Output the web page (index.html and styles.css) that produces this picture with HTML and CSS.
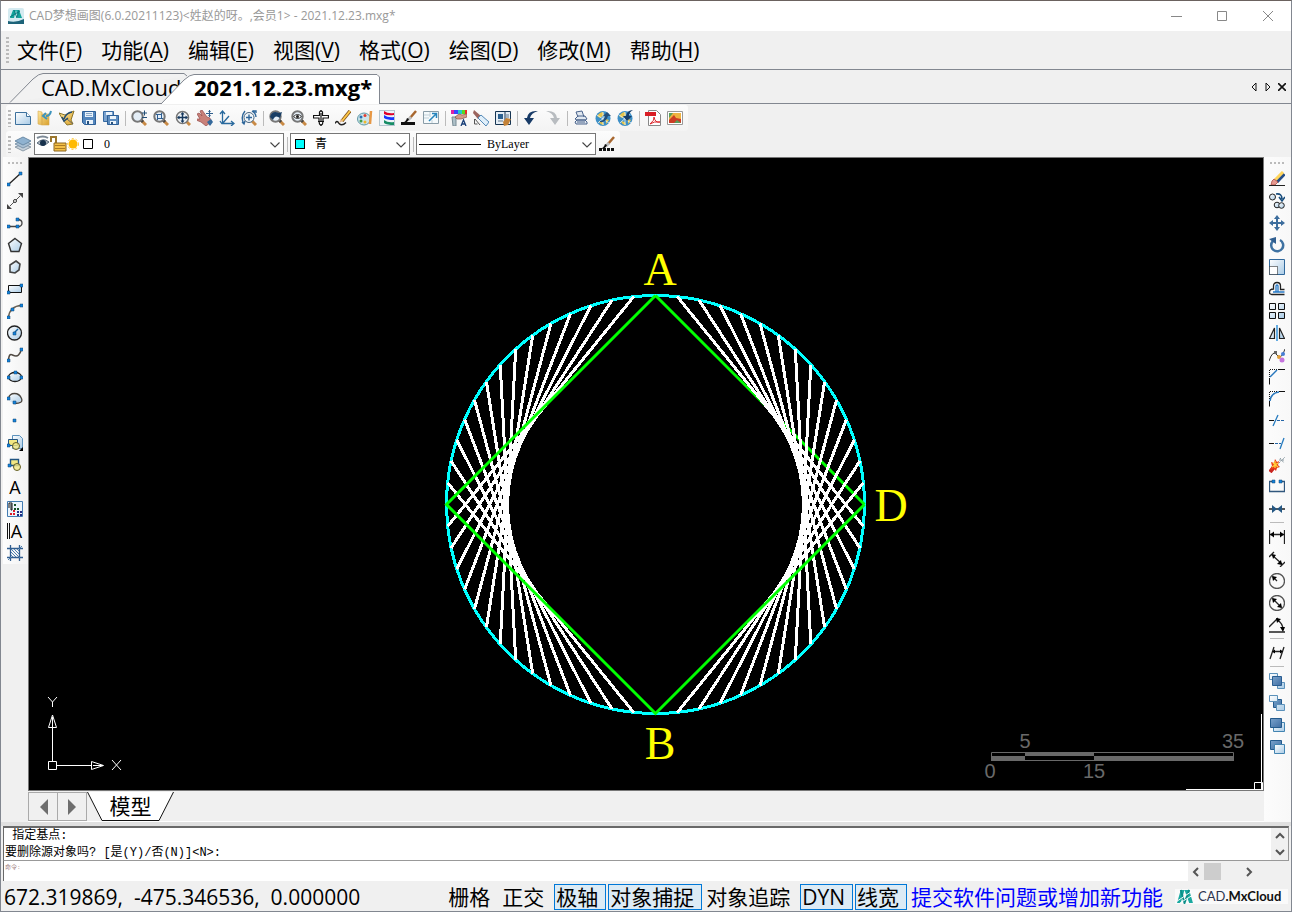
FILE: index.html
```html
<!DOCTYPE html>
<html lang="zh-CN">
<head>
<meta charset="utf-8">
<title>CAD梦想画图</title>
<link rel="stylesheet" href="styles.css">
</head>
<body>
<svg class="defs" aria-hidden="true">
  <defs>
    <linearGradient id="pale" x1="0" y1="0" x2="1" y2="1"><stop offset="0" stop-color="#fff"/><stop offset="1" stop-color="#a9cbe6"/></linearGradient>
    <linearGradient id="steel" x1="0" y1="0" x2="1" y2="1"><stop offset="0" stop-color="#7aa3cc"/><stop offset="1" stop-color="#3e6da3"/></linearGradient>
    <linearGradient id="gold" x1="0" y1="0" x2="1" y2="1"><stop offset="0" stop-color="#ffe9a0"/><stop offset="1" stop-color="#d9a02c"/></linearGradient>
    <symbol id="lens" viewBox="0 0 16 16"><path d="M10 10l5 5" stroke="#c98a45" stroke-width="3"/><path d="M10 10l2 2" stroke="#444" stroke-width="3"/><circle cx="6.5" cy="6.5" r="5.2" fill="#e4eef7" stroke="#777" stroke-width="2"/></symbol>
    <symbol id="brush" viewBox="0 0 16 16"><path d="M15 1L9 8" stroke="#a8672f" stroke-width="2.5"/><path d="M10 7l-3 3" stroke="#bbb" stroke-width="3"/><path d="M8 9q-1 4-7 4q4-1 5-5z" fill="#111"/></symbol>
    <symbol id="globe" viewBox="0 0 16 16"><circle cx="8" cy="8.5" r="7.500" fill="#3c8fc7"/><path d="M2 6q3-4 6-4l1 3l-4 3zM4 11l4 1l1 3q-4 0-5-4zM11 9l3 1l-3 4z" fill="#e8c54a"/><path d="M2 5l12 8M3 13L13 4M8 2v13" stroke="#e9f4fa" stroke-width=".8" fill="none"/></symbol>
    <symbol id="mark" viewBox="0 0 18 16"><path d="M1 15L5 1h4l-4 14z M9 1h5l4 14h-4z" fill="#1aa9a0"/><path d="M5 1l4 14 5-14" stroke="#0b8e88" fill="none" stroke-width="2"/><path d="M1 13L16 3M4 15L17 7" stroke="#fff" stroke-width="1"/></symbol>
    <symbol id="down" viewBox="0 0 10 6"><path d="M.5.5L5 5L9.500.5" fill="none" stroke="#444" stroke-width="1.100"/></symbol>
  </defs>
</svg>

<div class="window">
  <header class="titlebar">
    <svg class="app-icon" viewBox="0 0 16 16"><rect width="16" height="16" rx="2" fill="#d5ebf1"/><path d="M0 16V13q8 2 16-2v5z" fill="#1d6379"/><path d="M2 10L5 2h3l-2 8zM8 2h3l3 8h-4z" fill="#12a49b"/><path d="M6 2l3 8 2-8M2 9l10-6" stroke="#0a7c80" fill="none"/></svg>
    <h1>CAD梦想画图(6.0.20211123)&lt;姓赵的呀。,会员1&gt; - 2021.12.23.mxg*</h1>
    <div class="window-buttons">
      <button aria-label="最小化"><svg viewBox="0 0 12 12"><path d="M1 6.500h11"/></svg></button>
      <button aria-label="最大化"><svg viewBox="0 0 12 12"><path d="M1.500 1.500h9v9h-9z"/></svg></button>
      <button aria-label="关闭"><svg viewBox="0 0 12 12"><path d="M1 1l10 10M11 1L1 11"/></svg></button>
    </div>
  </header>

  <nav class="menubar">
    <span class="grip"></span>
    <button>文件(<u>F</u>)</button><button>功能(<u>A</u>)</button><button>编辑(<u>E</u>)</button><button>视图(<u>V</u>)</button><button>格式(<u>O</u>)</button><button>绘图(<u>D</u>)</button><button>修改(<u>M</u>)</button><button>帮助(<u>H</u>)</button>
  </nav>

  <div class="doc-tabs">
    <button class="doc-tab cloud"><svg viewBox="0 0 178 30"><path d="M1 29.500L24 6Q30 .500 34 .500H175L178 3"/></svg><span>CAD.MxCloud</span></button>
    <button class="doc-tab active"><svg viewBox="0 0 219 30"><path d="M0 30L23 6Q29 .500 33 .500H216L218.500 3V30"/></svg><span>2021.12.23.mxg*</span></button>
    <div class="tab-tools">
      <button aria-label="上一个"><svg viewBox="0 0 8 8"><path d="M6 0v8L2 4z" fill="none" stroke="#111"/></svg></button>
      <button aria-label="下一个"><svg viewBox="0 0 8 8"><path d="M2 0v8l4-4z" fill="none" stroke="#111"/></svg></button>
      <button aria-label="关闭标签"><svg viewBox="0 0 8 8"><path d="M0 0l8 8M8 0L0 8" stroke="#111" stroke-width="1.600"/></svg></button>
    </div>
  </div>

  <div class="toolbars">
    <div class="toolbar">
      <span class="grip"></span>
      <button aria-label="新建"><svg viewBox="0 0 16 16"><path d="M.500 2.500h11l4 4v8H.500z" fill="url(#pale)" stroke="#3d719d"/><path d="M11.500 2.500v4h4" fill="#fff" stroke="#3d719d"/></svg></button>
      <button aria-label="打开"><svg viewBox="0 0 16 16"><path d="M1 1l4 1v13l-4-1zM5 4h7v11H5z" fill="url(#gold)" stroke="#d6aa4e" stroke-width=".600"/><path d="M14 1q-1 5-5 5M9 3L6 6l4 3" stroke="#3e94bd" fill="none" stroke-width="2"/></svg></button>
      <button aria-label="打开云图"><svg viewBox="0 0 16 16"><path d="M0 3l6 2 9-4-3 9 2 4-6 1L4 10z" fill="url(#gold)" stroke="#8b7527"/><path d="M13 2Q7 3 5 9M3 7l2 4 4-3" fill="none" stroke="#244d71" stroke-width="1.500"/><path d="M8 9l6 5" stroke="#666"/></svg></button>
      <button aria-label="保存"><svg viewBox="0 0 16 16"><path d="M1.500 1.500h13v13h-11l-2-2z" fill="#5386bd" stroke="#2d5f97"/><path d="M4 2h8v5H4zM5 10h7v4H5z" fill="#e9f2fa"/><path d="M5 3.500h6M5 5.500h6" stroke="#89a8c8"/><path d="M6 11h2v3H6z" fill="#29527f"/></svg></button>
      <button aria-label="另存为"><svg viewBox="0 0 16 16"><path d="M.500 1.500h10v10H.500z" fill="#7aa2ce" stroke="#3569a1"/><path d="M3 2h6v3H3z" fill="#eaf3fb"/><path d="M4.500 5.500h11v9h-11z" fill="#5d8dc0" stroke="#2d5f97"/><path d="M7 6h6v3H7zM7 11h6v3H7z" fill="#edf5fb"/><path d="M8 12h2v2H8z" fill="#29527f"/></svg></button>
      <i class="sep"></i>
      <button aria-label="缩放"><svg viewBox="0 0 16 16"><use href="#lens"/><path d="M11 3h5M13.500.500v5M11 7.500h5" stroke="#224e77"/></svg></button>
      <button aria-label="窗口缩放"><svg viewBox="0 0 16 16"><use href="#lens"/><path d="M4.500 4.500h4v4h-4zM3 4.500h2M8 8.500h2M8.500 3v2M4.500 8v2" fill="none" stroke="#2f5f93"/></svg></button>
      <button aria-label="范围缩放"><svg viewBox="0 0 16 16"><path d="M11 11l4 4" stroke="#c98a45" stroke-width="3"/><circle cx="7.500" cy="7.500" r="6" fill="#f3f7fa" stroke="#777" stroke-width="1.600"/><path d="M3 7.500h9M7.500 3v9" stroke="#17395e" stroke-width="1.500"/><path d="M2 7.500l2.500-2v4zM13 7.500l-2.500-2v4zM7.500 2l-2 2.500h4zM7.500 13l-2-2.500h4z" fill="#17395e"/></svg></button>
      <button aria-label="平移"><svg viewBox="0 0 16 16"><path d="M0 4l2-1 3 3-2-5 2-1 5 7 3 1 1 4-5 4-5-4-5-2 1-1 3 0z" fill="#c98078" stroke="#934a4a" stroke-width=".700"/><path d="M10 12l4-3 2 3-3 4z" fill="#35699b"/><path d="M9 3.500h7M12.500 0v7" stroke="#315f8d"/><path d="M11 2l1.500-2L14 2zM11 5l1.500 2L14 5z" fill="#315f8d"/></svg></button>
      <button aria-label="坐标系"><svg viewBox="0 0 16 16"><path d="M3.500 1v12.500H15M3.500 13.500L10 6M1 4l2.500-3L6 4M12 11l3 2.500-3 2.500M1 11l2 3" fill="none" stroke="#29699d" stroke-width="1.300"/></svg></button>
      <button aria-label="动态缩放"><svg viewBox="0 0 16 16"><path d="M11 11l4 4" stroke="#c98a45" stroke-width="3"/><circle cx="8" cy="7.500" r="5" fill="#f0f6fa" stroke="#47637d"/><path d="M5 7.500h6M8 4.500v6M4 1Q-1 7 3 14M1 12l2 2 1-3M11 1q4 2 4 6M12 1h3v2" fill="none" stroke="#2d669a" stroke-width="1.400"/></svg></button>
      <i class="sep"></i>
      <button aria-label="上一视图"><svg viewBox="0 0 16 16"><use href="#lens"/><path d="M1 7q2-7 9-4l3-1-2 6Q6 4 4 10z" fill="#193e65"/></svg></button>
      <button aria-label="查看"><svg viewBox="0 0 16 16"><use href="#lens"/><path d="M2.500 6.500q4-4 8 0q-4 4-8 0" fill="#fff" stroke="#333"/><circle cx="6.500" cy="6.500" r="1.500" fill="#222"/></svg></button>
      <button aria-label="十字移动"><svg viewBox="0 0 16 16"><path d="M6.500 5.500V2L8 .500 9.500 2v3.500h6v2.500H10v3l-.500 3L8 15.500 6.500 14 6 11V8H.500V5.500z" fill="#fff" stroke="#111" stroke-width="1.200"/><path d="M5 11.500h6M8 3v9" stroke="#111" stroke-width="1.200"/></svg></button>
      <button aria-label="画笔"><svg viewBox="0 0 16 16"><path d="M0 13.500q2-4 4 0q3 3 7-1" fill="none" stroke="#222" stroke-width="1.300"/><path d="M15 1L7 11" stroke="#80521d" stroke-width="3.500"/><path d="M15 1L7 11" stroke="#ffc847" stroke-width="2"/><path d="M6 9l-2 4 4-2z" fill="#e3b78c"/></svg></button>
      <button aria-label="调色板"><svg viewBox="0 0 16 16"><ellipse cx="7" cy="9" rx="6.500" ry="6" fill="#cce4ea" stroke="#5e97a5"/><circle cx="4" cy="7" r="1.500" fill="#2970b4"/><circle cx="8" cy="5.500" r="1.500" fill="#e33d2f"/><circle cx="4" cy="11" r="1.500" fill="#3d9c47"/><circle cx="8" cy="12" r="1.500" fill="#efb82d"/><path d="M14 1l-1 13" stroke="#e79845" stroke-width="2.500"/></svg></button>
      <button aria-label="颜色"><svg viewBox="0 0 16 16"><rect x=".500" y=".500" width="15" height="15" fill="#eef4f8" stroke="#b5c6d0"/><path d="M5 1q4 3 10 2v2Q8 6 5 4z" fill="#e0002b"/><path d="M5 5q4 3 10 2v3Q8 10 5 8z" fill="#1736ff"/><path d="M5 10q4 3 10 2v3Q8 15 5 13z" fill="#178d66"/></svg></button>
      <button aria-label="线宽"><svg viewBox="0 0 16 16"><use href="#brush"/><path d="M0 13.500h14" stroke="#111" stroke-width="3"/></svg></button>
      <button aria-label="全屏"><svg viewBox="0 0 16 16"><path d="M.500 1.500h15v12H.500z" fill="#f5fafc" stroke="#8a9da8"/><path d="M1 5h6M7 2v5M9 10v3M1 8h5" stroke="#c2d1d9"/><path d="M6 11l7-7M9 3.500h4.500V8" fill="none" stroke="#2684bc" stroke-width="1.500"/></svg></button>
      <i class="sep"></i>
      <button aria-label="颜色选择"><svg viewBox="0 0 16 16"><path d="M0 0h3v4H0z" fill="#e020a0"/><path d="M3 0h4v4H3z" fill="#3945ff"/><path d="M7 0h4v4H7z" fill="#24c8cb"/><path d="M11 0h3v4h-3z" fill="#56db20"/><path d="M14 0h2v4h-2z" fill="#ef2828"/><path d="M1 7h4v9H2z" fill="#adc0c8" stroke="#788b94"/><path d="M4 7l4-3 3 1 5-1v3l-6 2-4 0z" fill="#d39b87" stroke="#8c5247" stroke-width=".700"/><path d="M10 16l2.500-6 2.500 6M11 14h3" stroke="#193f78" stroke-width="1.300" fill="none"/></svg></button>
      <button aria-label="清除"><svg viewBox="0 0 16 16"><path d="M1 0l7 6-3 3-5-6z" fill="#9b655f"/><path d="M5 8l3-3 8 7-3 4z" fill="#e0effa" stroke="#5489b7"/><path d="M1.500 9v5h3M2 9l5 6" fill="none" stroke="#555"/></svg></button>
      <button aria-label="打印预览"><svg viewBox="0 0 16 16"><path d="M.500 1.500h15v13H.500z" fill="#e4edf5" stroke="#163553"/><path d="M3 4h5v5H3z" fill="#2c6190"/><path d="M10 2v12" stroke="#163553"/><path d="M3 11h5M11 5h3M11 7h3" stroke="#657b8d"/><path d="M8 12l3-4 5 1-3 6-4 1z" fill="#c38238"/></svg></button>
      <i class="sep"></i>
      <button aria-label="撤销"><svg viewBox="0 0 16 16"><path d="M15 1Q5 0 4 8H1l5 7 5-7H7q1-5 8-7" fill="#183b67"/></svg></button>
      <button aria-label="重做"><svg viewBox="0 0 16 16"><path d="M1 1q10-1 11 7h3l-5 7-5-7h4Q8 3 1 1" fill="#b8bcc0"/></svg></button>
      <i class="sep"></i>
      <button aria-label="打印"><svg viewBox="0 0 16 16"><path d="M5 7L3 2l6-1 2 6M2 9l3-3h7l2 3-2 1H4zM2 12l2-2h8l2 2v2H3z" fill="#e1e8f0" stroke="#48628b"/><path d="M4 12h8" stroke="#48628b"/></svg></button>
      <button aria-label="上传"><svg viewBox="0 0 16 16"><use href="#globe"/><path d="M5 11q4 0 5-5L8 6l4-4 4 4-3 0q-2 7-8 6" fill="#234f7a"/></svg></button>
      <button aria-label="下载"><svg viewBox="0 0 16 16"><use href="#globe"/><path d="M16 0q-6 0-7 6H6l4 5 5-5h-3q0-4 4-6" fill="#173f6b"/></svg></button>
      <i class="sep"></i>
      <button aria-label="导出PDF"><svg viewBox="0 0 16 16"><path d="M3.500.500h8l4 4v11h-12z" fill="#fff" stroke="#888"/><path d="M0 2h11v4H0z" fill="#d91d25"/><path d="M5 14q5-4 4-7q1 6 6 5q-6-1-10 2" fill="none" stroke="#dc252b"/></svg></button>
      <button aria-label="导出图片"><svg viewBox="0 0 16 16"><path d="M.500 1.500h15v13H.500z" fill="#fff" stroke="#999"/><path d="M2 3h12v10H2z" fill="#efb342"/><path d="M2 10l5-5 2 3 5 1v4H2z" fill="#cc3d25"/><path d="M2 3h4l-4 5zM7 13l3-3 4 3z" fill="#589e5b"/></svg></button>
    </div>
    <div class="toolbar">
      <span class="grip"></span>
      <button aria-label="图层"><svg viewBox="0 0 16 16"><path d="M0 11l8-3 8 3-8 4z" fill="#c5d0da" stroke="#8a9aa7"/><path d="M0 8l8-4 8 4-8 4z" fill="#a9c0d4" stroke="#7c95aa"/><path d="M0 5l8-4 8 4-8 4z" fill="#8fb2d0" stroke="#6b8ba6"/></svg></button>
      <label class="combo layer"><svg class="layer-icons" viewBox="0 0 58 18"><path d="M1 8q6-6 12-1q-6 6-12 1" fill="#aab4bd" stroke="#5e6f80"/><circle cx="7" cy="8" r="3" fill="#18324d"/><path d="M1 3q6-3 11 0" stroke="#7d8995" fill="none" stroke-width="2"/><path d="M15 7V2h5v7" fill="none" stroke="#9b772f" stroke-width="2"/><path d="M18 8h12v8H18z" fill="#f3bf46" stroke="#8c6721"/><path d="M19 10.500h10M19 13.500h10" stroke="#ac7b22"/><circle cx="37" cy="9" r="4.500" fill="#ffba00"/><circle cx="37" cy="9" r="5.500" fill="none" stroke="#ffc62c" stroke-dasharray="2 2"/><path d="M47.500 4.500h9v9h-9z" fill="#fff" stroke="#000"/></svg><select aria-label="图层"><option>0</option></select><svg class="arrow"><use href="#down"/></svg></label>
      <i class="sep"></i>
      <label class="combo color"><i class="swatch"></i><select aria-label="颜色"><option>青</option></select><svg class="arrow"><use href="#down"/></svg></label>
      <i class="sep"></i>
      <label class="combo linetype"><i class="line-sample"></i><select aria-label="线型"><option>ByLayer</option></select><svg class="arrow"><use href="#down"/></svg></label>
      <button aria-label="线型管理"><svg viewBox="0 0 16 16"><use href="#brush"/><path d="M0 13.500h16" stroke="#111" stroke-width="3" stroke-dasharray="3 1"/></svg></button>
    </div>
  </div>

  <main class="workspace">
    <aside class="palette draw">
      <span class="grip flat"></span>
      <button aria-label="直线"><svg viewBox="0 0 16 16"><path class="k" d="M2 13L14 2"/><path class="dots" d="M0 12h3v3H0zM12 1h3v3h-3z"/></svg></button>
      <button aria-label="构造线"><svg viewBox="0 0 16 16"><path d="M3 13L13 3" stroke="#555"/><path d="M11 0h5v5zM0 11v5h5z" fill="#444"/><circle cx="8" cy="8" r="1.500" fill="#fff" stroke="#333"/></svg></button>
      <button aria-label="多段线"><svg viewBox="0 0 16 16"><path d="M2 11.500h9M10 4.500q5 0 5 3.500t-4 3.500" fill="none" stroke="#444" stroke-width="1.300"/><path class="dots" d="M0 10h3v3H0zM9 10h3v3H9zM9 3h3v3H9z"/></svg></button>
      <button aria-label="正多边形"><svg viewBox="0 0 16 16"><path d="M8 1.500l6.500 5-2.500 8H4L1.500 6.500z" fill="url(#pale)" stroke="#333" stroke-width="1.400"/></svg></button>
      <button aria-label="云线"><svg viewBox="0 0 16 16"><path d="M9 2l4 3-1 6-4 3-5-1V6z" fill="url(#pale)" stroke="#444" stroke-width="1.600"/></svg></button>
      <button aria-label="矩形"><svg viewBox="0 0 16 16"><path d="M1.500 4.500h13v7h-13z" fill="url(#pale)" stroke="#111"/><path class="dots" d="M0 10h3v3H0zM13 3h3v3h-3z"/></svg></button>
      <button aria-label="圆弧"><svg viewBox="0 0 16 16"><path d="M1.500 14Q3 3 14.500 2.500" fill="none" stroke="#6a6256" stroke-width="1.500"/><path class="dots" d="M0 13h3v3H0zM4 5h3v3H4zM13 1h3v3h-3z"/></svg></button>
      <button aria-label="圆"><svg viewBox="0 0 16 16"><circle cx="7.500" cy="8" r="7" fill="url(#pale)" stroke="#222" stroke-width="1.300"/><path d="M7 8l4-4" stroke="#16639f" stroke-width="1.500"/><path class="dots" d="M6 7h3v3H6z"/></svg></button>
      <button aria-label="样条曲线"><svg viewBox="0 0 16 16"><path d="M1.500 14q0-8 4-6t6 0t3-6" fill="none" stroke="#514a42" stroke-width="1.500"/><path class="dots" d="M0 12h3v3H0zM13 1h3v3h-3z"/></svg></button>
      <button aria-label="椭圆"><svg viewBox="0 0 16 16"><ellipse cx="8" cy="8" rx="6.500" ry="4.500" fill="url(#pale)" stroke="#222" stroke-width="1.300"/><path class="dots" d="M0 7h3v3H0zM7 2h3v3H7zM13 7h3v3h-3z"/></svg></button>
      <button aria-label="椭圆弧"><svg viewBox="0 0 16 16"><ellipse cx="8" cy="7.500" rx="6.500" ry="4.500" fill="url(#pale)"/><path d="M1.500 7.500q1-5 6-5t7 5t-7 5" fill="none" stroke="#4b4640" stroke-width="1.300"/><path class="dots" d="M0 6h3v3H0zM6 10h3v3H6z"/></svg></button>
      <button aria-label="点"><svg viewBox="0 0 16 16"><path class="dots" d="M6 6h3v3H6z"/></svg></button>
      <button aria-label="插入块"><svg viewBox="0 0 16 16"><path d="M5.500.500h7l3 3v10h-10z" fill="url(#pale)" stroke="#5b91bc"/><path d="M1.500 4.500h9v6h-9z" fill="#f2e884" stroke="#215481"/><circle cx="9" cy="11" r="3.500" fill="#f2e884" fill-opacity=".8" stroke="#645f25"/><path d="M16 12v4h-4z"/><path class="dots" d="M0 9h3v3H0z"/></svg></button>
      <button aria-label="创建块"><svg viewBox="0 0 16 16"><path d="M3.500 2.500h8v6h-8z" fill="#f2e884" stroke="#215481" stroke-width="1.400"/><circle cx="10" cy="10" r="3.500" fill="#f2e884" fill-opacity=".8" stroke="#645f25"/><path class="dots" d="M1 7h3v3H1z"/></svg></button>
      <button class="letter">A</button>
      <button aria-label="图案填充"><svg viewBox="0 0 16 16"><path d="M.500.500h15v15H.500z" fill="#edf5fc" stroke="#437cb2"/><path d="M2 7V2h3v7H4V3" fill="none" stroke="#111"/><path d="M7 3h2v2H7zM7 7h2v2H7zM10 7h2v2h-2z" fill="#175126"/><path d="M3 12h2v2H3zM6 9h2v2H6zM6 12h2v2H6z" fill="#dc1c29"/><path d="M10 10h2v2h-2zM13 10h2v2h-2zM10 13h2v2h-2zM13 13h2v2h-2z" fill="#222d83"/></svg></button>
      <button class="letter multiline">A</button>
      <button aria-label="面域"><svg viewBox="0 0 16 16"><path d="M0 3.500h16M0 12.500h16M3.500 0v16M12.500 0v16" stroke="#315e91" stroke-width="1.300"/><path d="M4 4l9 9M4 7l5 5M7 4l5 5M4 10l2 2M10 4l2 2M15 1L12 4M1 15l3-3" stroke="#4d7fae"/></svg></button>
    </aside>

    <section class="document">
      <div class="canvas">
        <svg viewBox="0 0 1234 632" role="img" aria-label="圆与弦图形">
          <g transform="translate(626.500 346.500)" class="geometry">
            <circle r="209" stroke="#0ff"/>
            <path class="square" d="M0-209L209 0"/>
            <g stroke="#fff">
              <path id="chords" d="M-21.800-207.900L-207.900 21.800M-43.500-204.400L-204.400 43.500M-64.600-198.800L-198.800 64.600M-85-190.900L-190.900 85M-104.500-181L-181 104.500M-122.800-169.100L-169.100 122.800M-139.800-155.300L-155.300 139.800M-155.300-139.800L-139.800 155.300M-169.100-122.800L-122.800 169.100M-181-104.500L-104.500 181M-190.900-85L-85 190.900M-198.800-64.600L-64.600 198.800M-204.400-43.500L-43.500 204.400M-207.900-21.800L-21.800 207.900"/>
              <use href="#chords" transform="scale(-1 1)"/>
            </g>
            <path class="square" d="M0-209L-209 0L0 209L209 0"/>
          </g>
          <g class="labels"><text x="631" y="127">A</text><text x="631" y="601">B</text><text x="862" y="363">D</text></g>
          <g class="axes"><path d="M19.500 603.500h8v8h-8zM23.500 603V570M28 607.500h34M19.500 569.500h8L23.500 557zM62.500 603.500v8l12-4zM23.500 559v10M64 607.500h10"/><path d="M19 539l4.500 5v5M28 539l-4.500 5M83 602l9 10M92 602l-9 10"/></g>
          <g class="ruler"><path d="M962.500 594.500h242v8h-242z" fill="none" stroke="#696969"/><path d="M962 598h34v5h-34zM996 594h69v4h-69zM1065 598h140v5h-140z"/><text x="996" y="590">5</text><text x="1204" y="590">35</text><text x="961" y="620">0</text><text x="1065" y="620">15</text></g>
          <g class="axes"><path d="M1157 631.500h77M1225.500 624.500h8v7h-8zM1232.500 556v76"/></g>
        </svg>
      </div>
      <div class="model-tabs">
        <button class="step" aria-label="前"><svg viewBox="0 0 16 16"><path d="M13 0v16L5 8z" fill="#6e6e6e"/></svg></button>
        <button class="step" aria-label="后"><svg viewBox="0 0 16 16"><path d="M4 0v16l8-8z" fill="#6e6e6e"/></svg></button>
        <button class="model"><svg viewBox="0 0 87 29"><path d="M.500 0L15 28.500H72L86.500 0" fill="#fff" stroke="#111"/></svg><span>模型</span></button>
      </div>
    </section>

    <aside class="palette modify">
      <span class="grip flat"></span>
      <button aria-label="删除"><svg viewBox="0 0 16 16"><path d="M15.500 3L8 11" stroke="#264e88" stroke-width="3"/><path d="M14 1L6 9" stroke="#ffd55b" stroke-width="3"/><path d="M5 8l4 3-3 3H2l1-4z" fill="#e79a92" stroke="#a23f36" stroke-width=".700"/><path d="M0 14.500h16" stroke="#222"/></svg></button>
      <button aria-label="复制"><svg viewBox="0 0 16 16"><circle cx="3.500" cy="4" r="3" fill="url(#pale)" stroke="#222"/><circle cx="8" cy="12" r="2.800" fill="url(#pale)" stroke="#222"/><circle cx="12.500" cy="12.500" r="2.800" fill="url(#pale)" stroke="#222"/><path d="M7 1q6-1 6 5M10 4l3 4 3-4" fill="none" stroke="#174c7c" stroke-width="1.600"/></svg></button>
      <button aria-label="移动"><svg viewBox="0 0 16 16"><path d="M8 2v12M2 8h12" stroke="#3c6d9d" stroke-width="2"/><path d="M8 0l3 4H5zM8 16l3-4H5zM0 8l4-3v6zM16 8l-4-3v6z" fill="#3c6d9d"/></svg></button>
      <button aria-label="旋转"><svg viewBox="0 0 16 16"><path d="M11 3a6 6 0 1 1-7 1" fill="none" stroke="#3f72a2" stroke-width="2.500"/><path d="M0 2L7 0v7z" fill="#315f90"/></svg></button>
      <button aria-label="缩放图形"><svg viewBox="0 0 16 16"><path d="M.500.500h15v15H.500z" fill="url(#pale)" stroke="#31699c"/><path d="M.500 7.500h8v8h-8z" fill="#fff" stroke="#111" stroke-dasharray="1 1"/></svg></button>
      <button aria-label="偏移"><svg viewBox="0 0 16 16"><path d="M15.500 13.500H3Q.500 13.500.500 11q0-3 4-3V5q0-3.500 3.500-3.500T11.500 5v3.500h4" fill="none" stroke="#222" stroke-width="1.300"/><path d="M15.500 11H4M7 10.500V5q0-1 1-1t1 1v5.500" fill="none" stroke="#2478c6" stroke-width="1.300"/></svg></button>
      <button aria-label="阵列"><svg viewBox="0 0 16 16"><path d="M.500.500h6v6h-6zM9.500.500h6v6h-6zM.500 9.500h6v6h-6zM9.500 9.500h6v6h-6z" fill="url(#pale)" stroke="#111"/></svg></button>
      <button aria-label="镜像"><svg viewBox="0 0 16 16"><path d="M5.500 3v10.500h-5zM10.500 3v10.500h5z" fill="url(#pale)" stroke="#222" stroke-width="1.200"/><path d="M8 0v16" stroke="#1382d5" stroke-width="1.300"/></svg></button>
      <button aria-label="编辑曲线"><svg viewBox="0 0 16 16"><path d="M0 14q4-12 8-6t8-6" fill="none" stroke="#333"/><path d="M5 4h3v3H5z" fill="#666"/><circle cx="10" cy="10" r="2" fill="#df9e37"/><circle cx="14" cy="7" r="2" fill="#467ed4"/><circle cx="13" cy="13" r="2.500" fill="#c574dd"/></svg></button>
      <button aria-label="倒角"><svg viewBox="0 0 16 16"><path d="M.500 15.500V9M9 .500h7" stroke="#111" fill="none"/><path d="M.500 8V.500H9" stroke="#111" stroke-dasharray="1 1" fill="none"/><path d="M1 8l7-7" stroke="#2777bd" stroke-width="1.500"/></svg></button>
      <button aria-label="圆角"><svg viewBox="0 0 16 16"><path d="M.500 15.500V10M10 .500h6" stroke="#111" fill="none"/><path d="M.500 8V.500H9" stroke="#111" stroke-dasharray="1 1" fill="none"/><path d="M1 10Q2 2 10 1" stroke="#2777bd" stroke-width="1.600" fill="none"/></svg></button>
      <button aria-label="修剪"><svg viewBox="0 0 16 16"><path d="M0 7.500h5" stroke="#111"/><path d="M8 7.500h8" stroke="#2365a7" stroke-dasharray="3 1"/><path d="M4 13L9 2" stroke="#267bbf" stroke-width="1.300"/></svg></button>
      <button aria-label="延伸"><svg viewBox="0 0 16 16"><path d="M0 8.500h5" stroke="#111"/><path d="M6 8.500h6" stroke="#2365a7" stroke-dasharray="3 1"/><path d="M11 14L15 3" stroke="#267bbf" stroke-width="1.300"/></svg></button>
      <button aria-label="分解"><svg viewBox="0 0 16 16"><path d="M1 15l4-5" stroke="#c92520" stroke-width="4"/><path d="M2 5l3 1 1-4 2 3 2-1-1 4 2 2-3 1-1 3-2-2-4 1 2-4z" fill="#e93b1a"/><path d="M4 6l5 4M3 10l6-4M6 4v7" stroke="#ffd23b" stroke-width="1.300"/><path d="M10 6l6-6M11 1l4 5M10 3h6" stroke="#8b9ba3" stroke-dasharray="2 1"/></svg></button>
      <button aria-label="打断"><svg viewBox="0 0 16 16"><path d="M4 2.500H.500v10h15v-10H12" fill="none" stroke="#31577d" stroke-width="1.300"/><path class="dots" d="M3 1h3v3H3zM10 1h3v3h-3z"/></svg></button>
      <button aria-label="合并"><svg viewBox="0 0 16 16"><path d="M0 8h16" stroke="#111" stroke-width="1.400"/><path d="M3 4l5 4-5 4zM13 4L8 8l5 4z" fill="#245783"/></svg></button>
      <i class="rule"></i>
      <button aria-label="线性标注"><svg viewBox="0 0 16 16"><path class="k" d="M.500 1v14M15.500 1v14M1 5.500h14"/><path d="M1 5.500l4-3v6zM15 5.500l-4-3v6z"/></svg></button>
      <button aria-label="对齐标注"><svg viewBox="0 0 16 16"><path class="k" d="M0 6l5-5M11 16l5-5M3 4l10 9"/><path d="M3 3l1 5 3-4zM13 14l-5-1 4-4z"/></svg></button>
      <button aria-label="半径标注"><svg viewBox="0 0 16 16"><circle cx="8" cy="8" r="7.500" fill="none" stroke="#555" stroke-width="1.300"/><path class="k" d="M4 4l4 4"/><path d="M3 3l5 1-4 4z"/></svg></button>
      <button aria-label="直径标注"><svg viewBox="0 0 16 16"><circle cx="8" cy="8" r="7.500" fill="none" stroke="#555" stroke-width="1.300"/><path class="k" d="M4 4l8 8"/><path d="M3 3l5 1-4 4zM13 13l-5-1 4-4z"/></svg></button>
      <button aria-label="角度标注"><svg viewBox="0 0 16 16"><path class="k" d="M0 15h16M0 10L9 1M8 3q6 3 6 10"/><path d="M7 1l5 1-4 4zM11 10h5l-2 5z"/></svg></button>
      <i class="rule"></i>
      <button aria-label="编辑标注"><svg viewBox="0 0 16 16"><path class="k" d="M1 14L5 2M11 14l4-12M4 6.500h9"/><path d="M3 6.500l3-2v4zM14 6.500l-3-2v4z"/></svg></button>
      <i class="rule"></i>
      <button aria-label="前置"><svg viewBox="0 0 16 16"><path d="M.500.500h8v6h-8zM8.500 9.500h7v6h-7z" fill="url(#pale)" stroke="#5b91ba"/><path d="M3.500 3.500h9v9h-9z" fill="url(#steel)" stroke="#295d91"/></svg></button>
      <button aria-label="后置"><svg viewBox="0 0 16 16"><path d="M4.500 4.500h8v8h-8z" fill="url(#steel)" stroke="#245b8d"/><path d="M.500.500h8v6h-8zM7.500 9.500h8v6h-8z" fill="url(#pale)" stroke="#5b91ba"/></svg></button>
      <button aria-label="置于对象之上"><svg viewBox="0 0 16 16"><path d="M4.500 5.500h11v9h-11z" fill="url(#pale)" stroke="#4284b1"/><path d="M1.500 1.500h11v9h-11z" fill="url(#steel)" stroke="#245b8d"/></svg></button>
      <button aria-label="置于对象之下"><svg viewBox="0 0 16 16"><path d="M1.500 1.500h11v9h-11z" fill="url(#steel)" stroke="#245b8d"/><path d="M5.500 5.500h10v9h-10z" fill="url(#pale)" stroke="#4284b1"/></svg></button>
    </aside>
  </main>

  <section class="command">
    <div class="history">
      <pre> 指定基点:
要删除源对象吗? [是(Y)/否(N)]&lt;N&gt;:</pre>
      <div class="vscroll"><button aria-label="向上"><svg viewBox="0 0 10 8"><path d="M1 6l4-4 4 4"/></svg></button><button aria-label="向下"><svg viewBox="0 0 10 8"><path d="M1 2l4 4 4-4"/></svg></button></div>
    </div>
    <div class="prompt">
      <input aria-label="命令" value="命令:">
      <div class="hscroll"><button aria-label="向左"><svg viewBox="0 0 8 10"><path d="M6 1L2 5l4 4"/></svg></button><i></i><button aria-label="向右"><svg viewBox="0 0 8 10"><path d="M2 1l4 4-4 4"/></svg></button></div>
    </div>
  </section>

  <footer class="status">
    <output>672.319869,&nbsp; -475.346536,&nbsp; 0.000000</output>
    <div class="modes">
      <button>栅格</button><button>正交</button><button class="on">极轴</button><button class="on">对象捕捉</button><button>对象追踪</button><button class="on">DYN</button><button class="on">线宽</button>
    </div>
    <a class="feedback" href="#feedback">提交软件问题或增加新功能</a>
    <a class="brand" href="#cloud"><svg viewBox="0 0 18 16"><use href="#mark"/></svg><span>CAD<b>.MxCloud</b></span></a>
  </footer>
</div>
</body>
</html>
```

FILE: styles.css
```css
* { box-sizing: border-box; }

html, body { height: 100%; margin: 0; }

body {
  background: #f0f0f0;
  color: #000;
  font-family: "Open Sans", "Noto Sans CJK SC", sans-serif;
}

button {
  margin: 0;
  padding: 0;
  border: 0;
  background: none;
  color: inherit;
  font: inherit;
  white-space: nowrap;
}

svg { display: block; }
.defs { position: absolute; width: 0; height: 0; }

.window {
  display: flex;
  flex-direction: column;
  height: 100vh;
  border: 1px solid #828790;
  border-top-color: #6b625f;
}

/* title bar */
.titlebar {
  display: flex;
  align-items: center;
  height: 30px;
  padding-left: 7px;
  background: #fff;
}
.app-icon { width: 16px; height: 16px; }
.titlebar h1 {
  flex: 1;
  margin: 0 0 0 5px;
  color: #999;
  font-size: 12px;
  font-weight: 400;
  line-height: 20px;
}
.window-buttons { display: flex; }
.window-buttons button { display: grid; place-items: center; width: 46px; height: 28px; }
.window-buttons svg { width: 12px; height: 12px; fill: none; stroke: #888; }

/* menu */
.menubar {
  display: flex;
  align-items: center;
  gap: 19px;
  height: 38px;
  padding-left: 5px;
  font-size: 21px;
  line-height: 30px;
}
.menubar .grip { height: 27px; margin-right: -11px; }
.menubar u { text-decoration-thickness: 1px; text-underline-offset: 3px; }

.grip {
  flex: none;
  width: 3px;
  height: 17px;
  background: repeating-linear-gradient(#bbb 0 2px, transparent 2px 4px);
}
.grip.flat {
  width: 14px;
  height: 2px;
  margin: 5px 0 4px;
  background: repeating-linear-gradient(90deg, #bbb 0 2px, transparent 2px 4px);
}

/* document tabs */
.doc-tabs {
  display: flex;
  align-items: flex-end;
  height: 35px;
  padding-left: 8px;
  border-top: 1px solid #828790;
  border-bottom: 1px solid #828790;
  font-size: 22px;
  line-height: 26px;
}
.doc-tab { position: relative; display: flex; height: 30px; text-align: left; }
.doc-tab svg { position: absolute; inset: 0; width: 100%; height: 100%; fill: #f2f2f2; stroke: #828790; }
.doc-tab span { position: relative; }
.doc-tab.cloud { width: 178px; padding-left: 32px; line-height: 28px; }
.doc-tab.active { width: 219px; margin: 0 0 -1px -26px; padding-left: 33px; font-weight: 700; }
.doc-tab.active svg { fill: #fff; }
.tab-tools { display: flex; gap: 6px; margin: auto 5px auto auto; }
.tab-tools svg { width: 8px; height: 8px; }

/* tool rows */
.toolbars { height: 53px; }
.toolbar {
  display: flex;
  align-items: center;
  width: fit-content;
  height: 26px;
  margin: 1px 0 0 5px;
  padding: 0 2px;
  border-radius: 3px;
  background: linear-gradient(#fcfcfc, #f3f3f3);
}
.toolbar + .toolbar { margin-top: 0; }
.toolbar button, .palette button {
  display: grid;
  place-items: center;
  flex: none;
  width: 22px;
  height: 22px;
}
.toolbar button svg, .palette button svg { width: 16px; height: 16px; }
.toolbar .sep { width: 1px; height: 15px; margin: 0 2px 0 3px; background: #bbb; }
.toolbar .grip { margin-right: 1px; }

.combo { position: relative; }
.combo select {
  display: block;
  width: 100%;
  height: 22px;
  border: 1px solid #777;
  border-radius: 0;
  background: #fff;
  color: #000;
  font: 12px "Liberation Serif", "Noto Sans CJK SC", serif;
  appearance: none;
}
.combo .arrow { position: absolute; right: 4px; top: 9px; width: 10px; height: 6px; z-index: 1; }
.layer { width: 250px; }
.layer select { padding-left: 69px; }
.layer-icons { position: absolute; left: 2px; top: 2px; width: 58px; height: 18px; z-index: 1; }
.color { width: 120px; }
.color select { padding-left: 24px; }
.swatch { position: absolute; left: 5px; top: 6px; width: 10px; height: 10px; border: 1px solid #000; background: #0ff; z-index: 1; }
.linetype { width: 180px; }
.linetype select { padding-left: 70px; }
.line-sample { position: absolute; left: 3px; top: 11px; width: 62px; height: 1px; background: #000; z-index: 1; }

/* workspace */
.workspace { display: grid; grid-template-columns: 27px minmax(0, 1fr) 27px; flex: 1; min-height: 0; }
.palette { display: flex; flex-direction: column; align-items: center; align-self: start; }
.draw { margin-left: 2px; padding-right: 1px; background: linear-gradient(90deg, #fdfdfd, #f2f2f2); }
.modify { align-self: stretch; padding-right: 1px; background: linear-gradient(90deg, #fcfcfc, #f8f8f8); }
.palette .rule { width: 14px; height: 1px; margin: 2px 0 3px; background: #bbb; }
.palette .letter { font: 18px/20px "Open Sans", sans-serif; }
.palette .multiline { width: 16px; height: 16px; margin: 3px 0; border-left: 3px double #111; line-height: 14px; }
.k { fill: none; stroke: #222; stroke-width: 1.3; }
.dots { fill: #1283dd; stroke: #17456c; stroke-width: .5; }

.document { display: flex; flex-direction: column; min-width: 0; min-height: 0; }
.canvas { flex: 1; min-height: 0; border: 1px solid #777; background: #000; }
.canvas > svg { width: 100%; height: 100%; }
.geometry { fill: none; stroke-width: 3; shape-rendering: crispEdges; }
.square { stroke: #0f0; stroke-width: 3; shape-rendering: geometricPrecision; }
.labels { fill: #ff0; font: 46px "Liberation Serif", serif; text-anchor: middle; }
.axes { fill: none; stroke: #fff; stroke-width: 1; }
.ruler { fill: #696969; font: 20px "Liberation Sans", sans-serif; text-anchor: middle; }

.model-tabs { display: flex; height: 31px; padding-top: 1px; border-bottom: 1px solid #fff; font-size: 21px; }
.step { display: grid; place-items: center; width: 30px; height: 29px; border: 1px solid #aaa; }
.step + .step { margin-left: -1px; }
.step svg { width: 16px; height: 16px; }
.model { position: relative; width: 87px; height: 29px; line-height: 29px; }
.model svg { position: absolute; inset: 0; width: 100%; height: 100%; }
.model span { position: relative; }

/* command area */
.command { height: 60px; padding: 0 2px; border-top: 4px solid #e0e0e0; }
.history {
  display: flex;
  justify-content: space-between;
  height: 35px;
  border: 1px solid #999;
  border-top: 2px solid #696969;
  border-left-color: #696969;
  background: #fff;
}
.history pre {
  margin: 0;
  padding-left: 1px;
  font: 12px/17px "Liberation Mono", "Noto Sans CJK SC", monospace;
  overflow: hidden;
}
.vscroll { display: grid; width: 17px; background: #f0f0f0; }
.vscroll button, .hscroll button { display: grid; place-items: center; }
.vscroll svg { width: 10px; height: 8px; }
.hscroll svg { width: 8px; height: 10px; }
.vscroll svg, .hscroll svg { fill: none; stroke: #555; stroke-width: 2; }
.prompt { display: flex; height: 20px; border-left: 1px solid #696969; }
.prompt input {
  flex: 1;
  min-width: 0;
  height: 20px;
  padding: 0 0 10px 1px;
  border: 0;
  background: #fff;
  color: #a08080;
  font: 6px "Liberation Mono", "Noto Sans CJK SC", monospace;
}
.hscroll { display: flex; width: 71px; height: 17px; margin: 2px 30px 0 0; }
.hscroll button { width: 16px; }
.hscroll i { width: 17px; margin-right: 20px; background: #cdcdcd; }

/* status */
.status { display: flex; align-items: center; height: 29px; padding-left: 3px; font-size: 21px; line-height: 24px; }
.status output { flex: 1; white-space: nowrap; }
.modes { display: flex; gap: 2px; }
.modes button { height: 26px; padding: 0 7px 0 1px; border: 1px solid transparent; }
.modes .on { border-color: #0078d7; background: #dcebf5; }
.feedback { margin: 0 12px 0 4px; color: #00f; text-decoration: none; white-space: nowrap; }
.brand {
  display: flex;
  align-items: center;
  gap: 5px;
  width: 113px;
  height: 15px;
  margin-right: 3px;
  padding-left: 1px;
  background: #fafafa;
  color: #2c3550;
  font: 13px/15px Lato, "Open Sans", sans-serif;
  text-decoration: none;
}
.brand svg { width: 17px; height: 15px; }
.brand b { color: #111; font-weight: 700; }
```
